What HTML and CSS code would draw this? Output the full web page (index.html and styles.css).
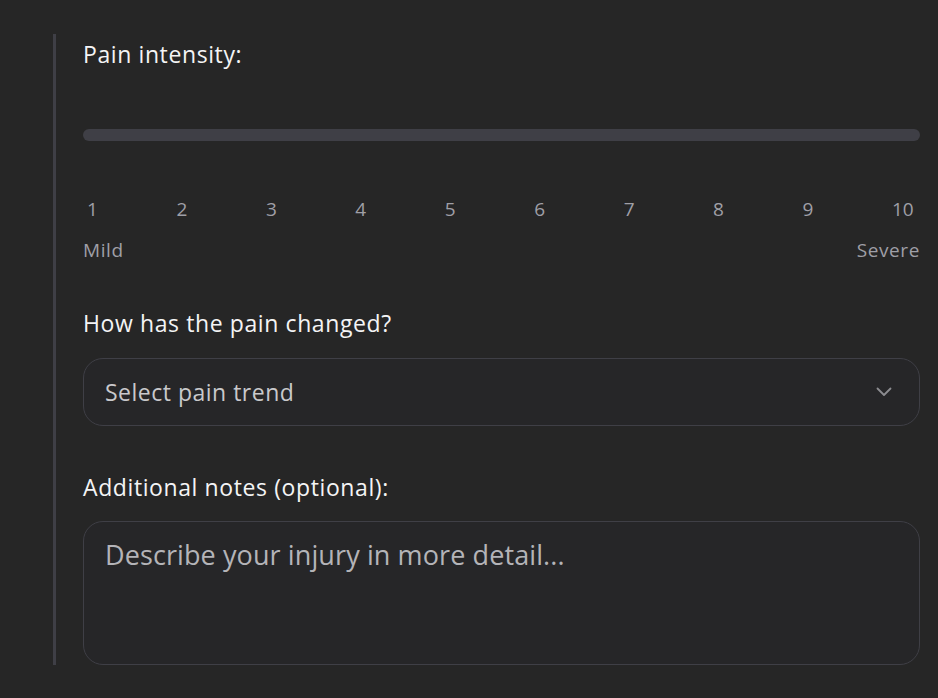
FILE: index.html
```html
<!DOCTYPE html>
<html lang="en">
<head>
<meta charset="utf-8">
<title>Pain form</title>
<link rel="stylesheet" href="styles.css">
</head>
<body>
<section class="panel">
  <div class="field">
    <label class="label label-first">Pain intensity:</label>
    <div class="track"></div>
    <div class="scale">
      <span>1</span><span>2</span><span>3</span><span>4</span><span>5</span>
      <span>6</span><span>7</span><span>8</span><span>9</span><span>10</span>
    </div>
    <div class="ends"><span>Mild</span><span>Severe</span></div>
  </div>
  <div class="field">
    <label class="label label-gap">How has the pain changed?</label>
    <div class="select">
      <span class="select-text">Select pain trend</span>
      <svg class="chevron" width="16" height="10" viewBox="0 0 16 10" aria-hidden="true"><polyline points="1.5,1.5 8,8 14.5,1.5" fill="none" stroke="#8c8c90" stroke-width="1.8" stroke-linecap="round" stroke-linejoin="round"/></svg>
    </div>
  </div>
  <div class="field">
    <label class="label label-gap">Additional notes (optional):</label>
    <div class="textarea"><span class="placeholder">Describe your injury in more detail...</span></div>
  </div>
</section>
</body>
</html>
```
FILE: styles.css
```css
html, body {
  margin: 0;
  padding: 0;
  background: #262626;
}
body {
  font-family: "Open Sans", "Liberation Sans", sans-serif;
  color: #f4f4f5;
  height: 698px;
  overflow: hidden;
}
.panel {
  margin: 34px 0 0 53px;
  border-left: 3px solid #3f3f46;
  padding: 0 18px 0 27px;
}
.label {
  display: block;
  font-size: 23px;
  line-height: 30px;
  color: #f4f4f5;
  letter-spacing: 0.6px;
}
.label-first {
  padding-top: 5px;
}
.label-gap {
  margin-top: 46px;
}
.track {
  margin-top: 60px;
  height: 12px;
  border-radius: 6px;
  background: #3f3f46;
}
.scale {
  margin-top: 56px;
  display: flex;
  justify-content: space-between;
  font-size: 19px;
  line-height: 24px;
  color: #9f9fa6;
}
.scale span {
  width: 32px;
  text-align: left;
  padding-left: 4px;
  box-sizing: border-box;
}
.ends {
  margin-top: 17px;
  display: flex;
  justify-content: space-between;
  font-size: 19px;
  line-height: 24px;
  color: #9f9fa6;
  letter-spacing: 0.6px;
}
.select {
  margin-top: 20px;
  height: 68px;
  box-sizing: border-box;
  border: 1px solid #3f3f46;
  border-radius: 20px;
  background: #262628;
  display: flex;
  align-items: center;
  justify-content: space-between;
  padding: 0 27px 0 21px;
}
.select-text {
  font-size: 23px;
  color: #c9c9cc;
  letter-spacing: 0.5px;
}
.chevron {
  display: block;
}
.textarea {
  margin-top: 19px;
  height: 144px;
  box-sizing: border-box;
  border: 1px solid #3f3f46;
  border-radius: 20px;
  background: #262628;
  padding: 15px 21px;
}
.placeholder {
  display: block;
  font-size: 27px;
  line-height: 36px;
  color: #b4b4b8;
  letter-spacing: 0.1px;
}
```
